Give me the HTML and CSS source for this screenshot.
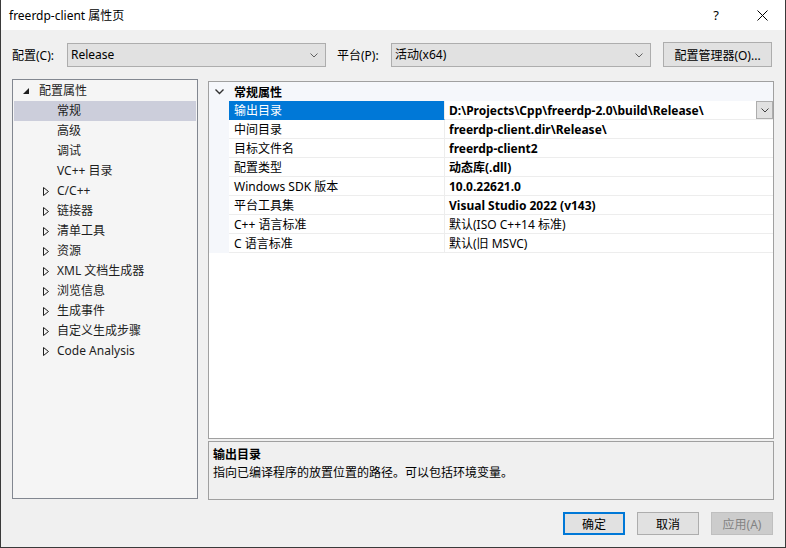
FILE: index.html
```html
<!DOCTYPE html>
<html>
<head>
    <title>freerdp-client 属性页</title>
    <link rel="stylesheet" href="styles.css">
</head>
<body>
    <div class="window">
        <div class="titlebar">
            <span class="title">freerdp-client 属性页</span>
            <span class="cap cap-help">?</span>
            <span class="cap">
                <svg width="11" height="11" viewBox="0 0 11 11"><path d="M0.5 0.5 L10.5 10.5 M10.5 0.5 L0.5 10.5" stroke="#000" stroke-width="1" fill="none"/></svg>
            </span>
        </div>

        <div class="toolbar">
            <span class="tb-label">配置(C):</span>
            <div class="combo combo-config">
                <span>Release</span>
                <svg class="chev" width="8" height="5" viewBox="0 0 8 5"><path d="M0.5 0.5 L4 4 L7.5 0.5" stroke="#606060" fill="none"/></svg>
            </div>
            <span class="tb-label tb-platform">平台(P):</span>
            <div class="combo combo-platform">
                <span>活动(x64)</span>
                <svg class="chev" width="8" height="5" viewBox="0 0 8 5"><path d="M0.5 0.5 L4 4 L7.5 0.5" stroke="#606060" fill="none"/></svg>
            </div>
            <button class="btn btn-manager">配置管理器(O)...</button>
        </div>

        <div class="main">
            <div class="tree">
                <div class="tree-row root">
                    <svg class="exp" width="6" height="6" viewBox="0 0 6 6"><polygon points="6,0 6,6 0,6" fill="#1e1e1e"/></svg>
                    <span>配置属性</span>
                </div>
                <div class="tree-row leaf selected">常规</div>
                <div class="tree-row leaf">高级</div>
                <div class="tree-row leaf">调试</div>
                <div class="tree-row leaf">VC++ 目录</div>
                <div class="tree-row branch"><svg class="exp" width="6" height="9" viewBox="0 0 6 9"><polygon points="0.5,0.5 5.5,4.5 0.5,8.5" fill="none" stroke="#1e1e1e"/></svg><span>C/C++</span></div>
                <div class="tree-row branch"><svg class="exp" width="6" height="9" viewBox="0 0 6 9"><polygon points="0.5,0.5 5.5,4.5 0.5,8.5" fill="none" stroke="#1e1e1e"/></svg><span>链接器</span></div>
                <div class="tree-row branch"><svg class="exp" width="6" height="9" viewBox="0 0 6 9"><polygon points="0.5,0.5 5.5,4.5 0.5,8.5" fill="none" stroke="#1e1e1e"/></svg><span>清单工具</span></div>
                <div class="tree-row branch"><svg class="exp" width="6" height="9" viewBox="0 0 6 9"><polygon points="0.5,0.5 5.5,4.5 0.5,8.5" fill="none" stroke="#1e1e1e"/></svg><span>资源</span></div>
                <div class="tree-row branch"><svg class="exp" width="6" height="9" viewBox="0 0 6 9"><polygon points="0.5,0.5 5.5,4.5 0.5,8.5" fill="none" stroke="#1e1e1e"/></svg><span>XML 文档生成器</span></div>
                <div class="tree-row branch"><svg class="exp" width="6" height="9" viewBox="0 0 6 9"><polygon points="0.5,0.5 5.5,4.5 0.5,8.5" fill="none" stroke="#1e1e1e"/></svg><span>浏览信息</span></div>
                <div class="tree-row branch"><svg class="exp" width="6" height="9" viewBox="0 0 6 9"><polygon points="0.5,0.5 5.5,4.5 0.5,8.5" fill="none" stroke="#1e1e1e"/></svg><span>生成事件</span></div>
                <div class="tree-row branch"><svg class="exp" width="6" height="9" viewBox="0 0 6 9"><polygon points="0.5,0.5 5.5,4.5 0.5,8.5" fill="none" stroke="#1e1e1e"/></svg><span>自定义生成步骤</span></div>
                <div class="tree-row branch"><svg class="exp" width="6" height="9" viewBox="0 0 6 9"><polygon points="0.5,0.5 5.5,4.5 0.5,8.5" fill="none" stroke="#1e1e1e"/></svg><span>Code Analysis</span></div>
            </div>

            <div class="right">
                <div class="grid">
                    <div class="cat-row">
                        <span class="gutter">
                            <svg width="9" height="6" viewBox="0 0 9 6"><path d="M0.5 0.5 L4.5 4.5 L8.5 0.5" stroke="#333" stroke-width="1.4" fill="none"/></svg>
                        </span>
                        <span class="cat-name">常规属性</span>
                    </div>
                    <div class="prop selected">
                        <div class="gutter"></div>
                        <div class="name">输出目录</div>
                        <div class="value bold">D:\Projects\Cpp\freerdp-2.0\build\Release\
                            <span class="drop-btn"><svg width="8" height="5" viewBox="0 0 8 5"><path d="M0.5 0.5 L4 4 L7.5 0.5" stroke="#404040" fill="none"/></svg></span>
                        </div>
                    </div>
                    <div class="prop">
                        <div class="gutter"></div>
                        <div class="name">中间目录</div>
                        <div class="value bold">freerdp-client.dir\Release\</div>
                    </div>
                    <div class="prop">
                        <div class="gutter"></div>
                        <div class="name">目标文件名</div>
                        <div class="value bold">freerdp-client2</div>
                    </div>
                    <div class="prop">
                        <div class="gutter"></div>
                        <div class="name">配置类型</div>
                        <div class="value bold">动态库(.dll)</div>
                    </div>
                    <div class="prop">
                        <div class="gutter"></div>
                        <div class="name">Windows SDK 版本</div>
                        <div class="value bold">10.0.22621.0</div>
                    </div>
                    <div class="prop">
                        <div class="gutter"></div>
                        <div class="name">平台工具集</div>
                        <div class="value bold">Visual Studio 2022 (v143)</div>
                    </div>
                    <div class="prop">
                        <div class="gutter"></div>
                        <div class="name">C++ 语言标准</div>
                        <div class="value">默认(ISO C++14 标准)</div>
                    </div>
                    <div class="prop">
                        <div class="gutter"></div>
                        <div class="name">C 语言标准</div>
                        <div class="value">默认(旧 MSVC)</div>
                    </div>
                </div>
                <div class="desc">
                    <div class="desc-title">输出目录</div>
                    <div class="desc-text">指向已编译程序的放置位置的路径。可以包括环境变量。</div>
                </div>
            </div>
        </div>

        <div class="footer">
            <button class="btn btn-ok">确定</button>
            <button class="btn">取消</button>
            <button class="btn btn-disabled">应用(A)</button>
        </div>
    </div>
</body>
</html>
```

FILE: styles.css
```css
* {
    box-sizing: border-box;
}
body {
    margin: 0;
    font-family: "Noto Sans", "Noto Sans CJK SC", sans-serif;
    font-size: 12px;
    color: #000;
}
.window {
    width: 786px;
    height: 548px;
    background: #f0f0f0;
    border: 1px solid #3a3a3a;
    border-top: none;
    display: flex;
    flex-direction: column;
    overflow: hidden;
}
.titlebar {
    height: 30px;
    background: #fff;
    display: flex;
    align-items: center;
    padding-left: 8px;
}
.title {
    flex: 1;
    line-height: 20px;
    padding-top: 2px;
}
.cap {
    width: 46px;
    height: 30px;
    display: flex;
    align-items: center;
    justify-content: center;
}
.cap-help {
    font-size: 13px;
}
.toolbar {
    display: flex;
    align-items: center;
    height: 25px;
    margin-top: 12px;
    padding-left: 11px;
}
.tb-label {
    width: 55px;
    line-height: 20px;
    padding-top: 2px;
}
.tb-platform {
    width: 54px;
    margin-left: 11px;
}
.combo {
    height: 24px;
    border: 1px solid #adadad;
    background: #e1e1e1;
    display: flex;
    align-items: center;
    justify-content: space-between;
    padding: 1px 7px 0 3px;
    line-height: 20px;
}
.combo-config {
    width: 259px;
}
.combo-platform {
    width: 260px;
}
.btn {
    font-family: inherit;
    font-size: 12px;
    color: #000;
    background: #e1e1e1;
    border: 1px solid #adadad;
    padding: 1px 0 0;
    height: 23px;
    width: 62px;
}
.btn-manager {
    width: 109px;
    height: 25px;
    margin-left: 12px;
}
.main {
    display: flex;
    gap: 10px;
    margin-top: 12px;
    padding-left: 11px;
}
.tree {
    width: 186px;
    height: 420px;
    background: #f5f5f5;
    border: 1px solid #828790;
    padding: 1px;
}
.tree-row {
    height: 20px;
    display: flex;
    align-items: center;
    line-height: 20px;
    color: #1e1e1e;
    white-space: nowrap;
}
.tree-row.root {
    padding-left: 9px;
}
.tree-row.root .exp {
    margin-right: 10px;
}
.tree-row.branch {
    padding-left: 29px;
}
.tree-row.branch .exp {
    margin-right: 8px;
}
.tree-row.leaf {
    padding-left: 43px;
}
.tree-row.selected {
    background: #cccedb;
}
.right {
    width: 566px;
    margin-top: 2px;
    display: flex;
    flex-direction: column;
    gap: 2px;
}
.grid {
    height: 358px;
    background: #fff;
    border: 1px solid #a0a0a0;
}
.cat-row {
    height: 19px;
    display: flex;
    background: #f5f7fb;
}
.gutter {
    width: 20px;
    flex: none;
    background: #f5f7fb;
    display: flex;
    align-items: center;
    justify-content: center;
}
.cat-name {
    font-weight: bold;
    line-height: 19px;
    padding-top: 1px;
    padding-left: 5px;
}
.prop {
    height: 19px;
    display: flex;
}
.prop .name {
    width: 216px;
    padding: 1px 0 0 5px;
    line-height: 17px;
    border-right: 1px solid #ededed;
    border-bottom: 1px solid #ededed;
    white-space: nowrap;
}
.prop .value {
    flex: 1;
    padding: 1px 0 0 4px;
    line-height: 17px;
    border-bottom: 1px solid #ededed;
    white-space: nowrap;
    display: flex;
    justify-content: space-between;
}
.prop .value.bold {
    font-weight: bold;
}
.prop.selected .name {
    background: #0078d7;
    color: #fff;
    border-bottom-color: #0078d7;
}
.drop-btn {
    width: 17px;
    height: 18px;
    margin-top: -1px;
    background: #e1e1e1;
    border: 1px solid #adadad;
    display: flex;
    align-items: center;
    justify-content: center;
}
.desc {
    height: 59px;
    border: 1px solid #a0a0a0;
    padding: 4px 4px;
    line-height: 18px;
}
.desc-title {
    font-weight: bold;
}
.footer {
    display: flex;
    justify-content: flex-end;
    gap: 12px;
    margin-top: 12px;
    padding-right: 12px;
}
.btn-ok {
    border: 2px solid #0078d7;
}
.btn-disabled {
    background: #cccccc;
    border-color: #bfbfbf;
    color: #838383;
}
```
